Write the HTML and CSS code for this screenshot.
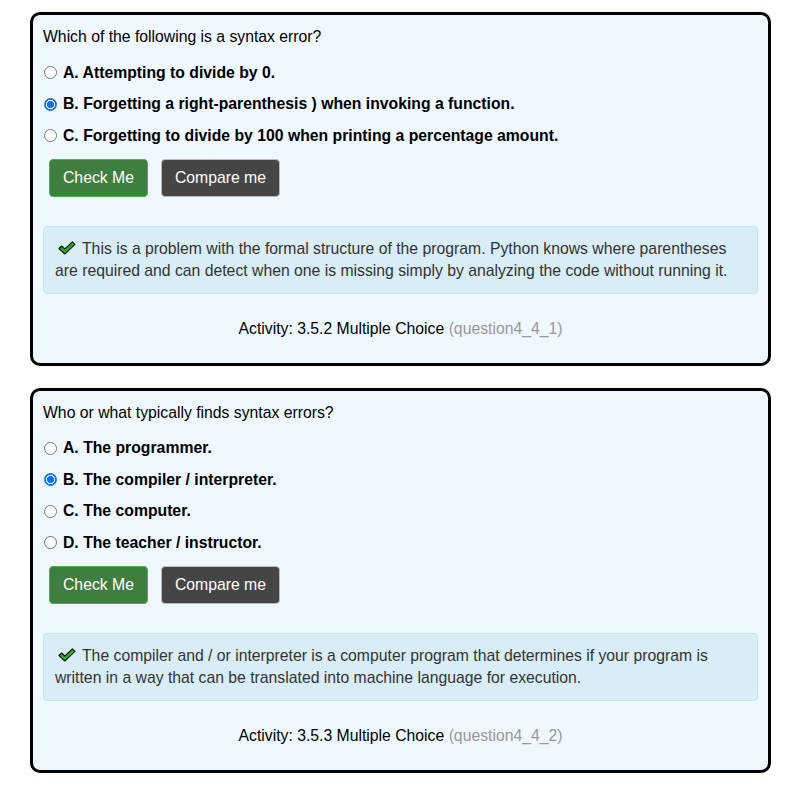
FILE: index.html
```html
<!DOCTYPE html>
<html>
<head>
<meta charset="utf-8">
<link rel="stylesheet" href="styles.css">
</head>
<body>
<div class="page">
  <div class="card">
    <div class="question">Which of the following is a syntax error?</div>
    <div class="options">
      <label class="option"><input type="radio" name="q1"><span>A. Attempting to divide by 0.</span></label>
      <label class="option"><input type="radio" name="q1" checked><span>B. Forgetting a right-parenthesis ) when invoking a function.</span></label>
      <label class="option"><input type="radio" name="q1"><span>C. Forgetting to divide by 100 when printing a percentage amount.</span></label>
    </div>
    <div class="buttons">
      <button class="btn btn-check">Check Me</button>
      <button class="btn btn-compare">Compare me</button>
    </div>
    <div class="feedback"><svg class="check" viewBox="0 0 18 14" width="18" height="14"><path d="M1 7.5 L3.6 5 L6.8 8 L14.4 0.8 L17 3.3 L6.8 13 Z" fill="#25b025" stroke="#111" stroke-width="1.1" stroke-linejoin="round"/></svg>This is a problem with the formal structure of the program. Python knows where parentheses are required and can detect when one is missing simply by analyzing the code without running it.</div>
    <div class="activity">Activity: 3.5.2 Multiple Choice <span class="qid">(question4_4_1)</span></div>
  </div>
  <div class="card">
    <div class="question">Who or what typically finds syntax errors?</div>
    <div class="options">
      <label class="option"><input type="radio" name="q2"><span>A. The programmer.</span></label>
      <label class="option"><input type="radio" name="q2" checked><span>B. The compiler / interpreter.</span></label>
      <label class="option"><input type="radio" name="q2"><span>C. The computer.</span></label>
      <label class="option"><input type="radio" name="q2"><span>D. The teacher / instructor.</span></label>
    </div>
    <div class="buttons">
      <button class="btn btn-check">Check Me</button>
      <button class="btn btn-compare">Compare me</button>
    </div>
    <div class="feedback"><svg class="check" viewBox="0 0 18 14" width="18" height="14"><path d="M1 7.5 L3.6 5 L6.8 8 L14.4 0.8 L17 3.3 L6.8 13 Z" fill="#25b025" stroke="#111" stroke-width="1.1" stroke-linejoin="round"/></svg>The compiler and / or interpreter is a computer program that determines if your program is written in a way that can be translated into machine language for execution.</div>
    <div class="activity">Activity: 3.5.3 Multiple Choice <span class="qid">(question4_4_2)</span></div>
  </div>
</div>
</body>
</html>
```
FILE: styles.css
```css
html, body {
  margin: 0;
  padding: 0;
  background: #fff;
}
body {
  font-family: "Liberation Sans", Arial, sans-serif;
  font-size: 15.75px;
  color: #000;
}
.page {
  padding: 12px 25px 0 30px;
  display: flex;
  flex-direction: column;
  gap: 22px;
}
.card {
  width: 741px;
  box-sizing: border-box;
  border: 3px solid #000;
  border-radius: 10px;
  background: #eff7ff;
  padding: 12px 10px 24px 10px;
}
.question {
  line-height: 20px;
}
.options {
  margin-top: 10px;
  display: flex;
  flex-direction: column;
}
.option {
  height: 31.5px;
  display: flex;
  align-items: center;
  font-weight: bold;
}
.option input {
  -webkit-appearance: none;
  appearance: none;
  margin: 0 6px 0 1px;
  width: 13px;
  height: 13px;
  box-sizing: border-box;
  border: 1px solid #767676;
  border-radius: 50%;
  background: #fff;
  flex: none;
}
.option input:checked {
  border: 1px solid #0b6fe6;
  background: radial-gradient(circle, #0b6fe6 0, #0b6fe6 3.3px, #fff 3.9px, #fff 4.4px, #0b6fe6 5px);
}
.buttons {
  margin-top: 7px;
  padding-left: 6px;
  display: flex;
  gap: 13px;
}
.btn {
  height: 38px;
  box-sizing: border-box;
  padding: 0 13px;
  border-radius: 4px;
  font-family: "Liberation Sans", Arial, sans-serif;
  font-size: 15.75px;
  color: #fff;
  cursor: pointer;
}
.btn-check {
  background: #3e7e41;
  border: 1px solid #4cae4c;
}
.btn-compare {
  background: #454545;
  border: 1px solid #bbb;
  padding: 0 13px;
}
.feedback {
  margin-top: 29px;
  background: #d9edf7;
  border: 1px solid #bce8f1;
  border-radius: 4px;
  padding: 11px;
  line-height: 22px;
  color: #333;
}
.check {
  vertical-align: -1px;
  margin: 0 6px 0 3px;
}
.activity {
  margin-top: 25px;
  text-align: center;
  line-height: 20px;
}
.qid {
  color: #999;
}
```
